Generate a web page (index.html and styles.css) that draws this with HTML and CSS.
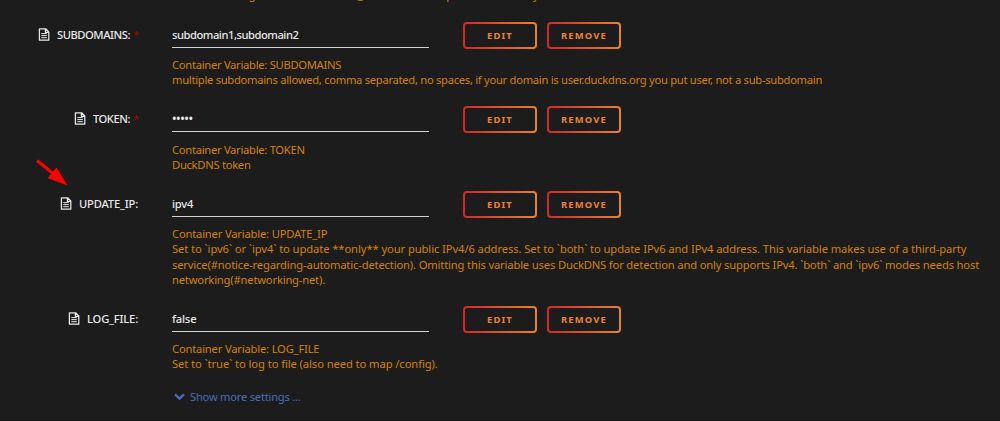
FILE: index.html
```html
<!DOCTYPE html>
<html lang="en">

<head>
  <meta charset="utf-8">
  <title>DuckDNS</title>
  <link rel="stylesheet" href="styles.css">
</head>
<body>

  <!-- file icon shared by all the rows -->
  <svg class="defs" width="0" height="0">
    <symbol id="file" viewBox="0 0 12 13">
      <path d="M1.4 .8H7.6L10.8 4V12.2H1.4ZM7.4 1V4.3H10.6" fill="none" stroke="currentColor" stroke-width="1.25" stroke-linejoin="round" />
      <path d="M3.3 5.6H8.8M3.3 7.6H8.8M3.3 9.7H8.8" fill="none" stroke="currentColor" stroke-width="1" />
    </symbol>
  </svg>

  <div class="settings">
    <p class="help cut">Container dialog needs the DuckDNS_HOST to be set up on the host daily</p>

    <div class="row">
      <div class="label"><svg class="icon"><use href="#file" /></svg><span class="tight">SUBDOMAINS:</span><span class="req">*</span></div>
      <div class="field">
        <div class="line"><span class="value tight">subdomain1,subdomain2</span><button>Edit</button><button>Remove</button></div>
        <p class="help"><span class="snug">Container Variable: SUBDOMAINS<br>multiple subdomains allowed, comma separated, no spaces, if your domain is user.duckdns.org you put user, not a sub-subdomain</span></p>
      </div>
    </div>

    <div class="row">
      <div class="label"><svg class="icon"><use href="#file" /></svg><span class="tight">TOKEN:</span><span class="req">*</span></div>
      <div class="field">
        <div class="line"><span class="value dots">•••••</span><button>Edit</button><button>Remove</button></div>
        <p class="help"><span class="snug">Container Variable: TOKEN<br>DuckDNS token</span></p>
      </div>
    </div>

    <div class="row tall">
      <div class="label"><svg class="icon"><use href="#file" /></svg><span>UPDATE_IP:</span></div>
      <div class="field">
        <div class="line"><span class="value">ipv4</span><button>Edit</button><button>Remove</button></div>
        <p class="help">Container Variable: UPDATE_IP<br><span class="loose">Set to `ipv6` or `ipv4` to update **only** your public IPv4/6 address. Set to `both` to update IPv6 and IPv4 address. This variable makes use of a third-party</span><br><span class="medium">service(#notice-regarding-automatic-detection). Omitting this variable uses DuckDNS for detection and only supports IPv4. `both` and `ipv6` modes needs host</span><br>networking(#networking-net).</p>
      </div>
    </div>

    <div class="row">
      <div class="label"><svg class="icon"><use href="#file" /></svg><span>LOG_FILE:</span></div>
      <div class="field">
        <div class="line"><span class="value">false</span><button>Edit</button><button>Remove</button></div>
        <p class="help">Container Variable: LOG_FILE<br><span class="loose">Set to `true` to log to file (also need to map /config).</span></p>
      </div>
    </div>

    <div class="more">
      <svg width="11" height="8" viewBox="0 0 11 8"><path d="M1 1.4L5.5 5.7L10 1.4" fill="none" stroke="#486dba" stroke-width="2.3" /></svg>
      <span>Show more settings ...</span>
    </div>
  </div>

  <svg class="arrow" width="34" height="30" viewBox="0 0 34 30">
    <path d="M2 2.5L18 15.5" stroke="#f00" stroke-width="3" />
    <path d="M32.5 27.5L12.5 20L21.5 9.5Z" fill="#f00" />
  </svg>

</body>
</html>
```
FILE: styles.css
```css
body {
  margin: 0;
  height: 421px;
  overflow: hidden;
  background: #1c1c1c;
  color: #e8e8e8;
  font-family: "Noto Sans", "Open Sans", sans-serif;
  font-size: 11.2px;
  letter-spacing: -0.18px;
}
.defs {
  position: absolute;
}
.settings {
  height: 421px;
  box-sizing: border-box;
  border-bottom: 1px solid #141414;
  overflow: hidden;
}
.help {
  margin: 0;
  color: #d48200;
  line-height: 15.3px;
  white-space: nowrap;
}
.help.cut {
  margin: -13px 0 19px 172px;
  height: 16px;
  letter-spacing: -0.25px;
}
.row {
  display: flex;
  height: 66px;
  margin-bottom: 18.4px;
}
.row.tall {
  height: 96.6px;
}

.tight {
  letter-spacing: -0.47px;
}
.snug {
  letter-spacing: -0.28px;
}
.medium {
  letter-spacing: -0.15px;
}
.loose {
  letter-spacing: -0.08px;
}

.label {
  display: flex;
  flex-shrink: 0;
  align-items: center;
  justify-content: flex-end;
  width: 138px;
  height: 25px;
  margin-right: 34px;
  font-weight: 500;
}
.icon {
  width: 12px;
  height: 13px;
  margin-right: 7px;
}
.req {
  width: 5px;
  margin-left: 3px;
  color: #a80000;
}
.line {
  display: flex;
  align-items: flex-start;
  height: 35.2px;
}
.value {
  width: 257px;
  height: 25px;
  line-height: 26px;
  margin-right: 34px;
  border-bottom: 1px solid #d0d0d0;
  font-weight: 500;
}
.value.dots {
  font-size: 12px;
  letter-spacing: -0.4px;
}
button {
  width: 74px;
  height: 27px;
  margin: 0 10px 0 0;
  padding: 0;
  border: 2px solid transparent;
  border-radius: 4px;
  background: linear-gradient(#1c1c1c, #1c1c1c) padding-box, linear-gradient(90deg, #d22828, #e8822c) border-box;
  color: #f08330;
  font-family: inherit;
  font-size: 9.4px;
  font-weight: 700;
  letter-spacing: 1.2px;
  text-transform: uppercase;
}
.more {
  display: flex;
  align-items: center;
  gap: 5px;
  margin: -1px 0 0 174px;
  color: #486dba;
  letter-spacing: -0.24px;
}
.arrow {
  position: absolute;
  left: 35px;
  top: 158px;
}
```
